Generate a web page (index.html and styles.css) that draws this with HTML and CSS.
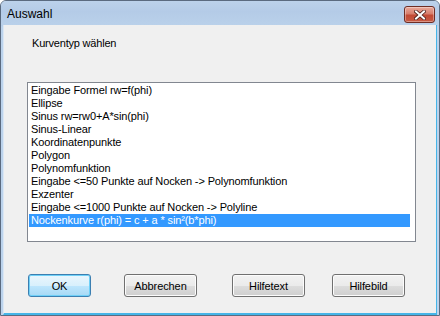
FILE: index.html
```html
<!DOCTYPE html>
<html>
<head>
<meta charset="utf-8">
<link rel="stylesheet" href="styles.css">
</head>
<body>
<div class="window">
  <div class="titlebar">
    <span class="title">Auswahl</span>
    <div class="close">
      <svg width="12" height="10" viewBox="0 0 12 10">
        <path d="M2 1.5 L10 8.5 M10 1.5 L2 8.5" stroke="#4a1f1a" stroke-width="3.6" stroke-linecap="square" fill="none"/>
        <path d="M2 1.5 L10 8.5 M10 1.5 L2 8.5" stroke="#ffffff" stroke-width="2" stroke-linecap="square" fill="none"/>
      </svg>
    </div>
  </div>
  <div class="client">
    <div class="label">Kurventyp wählen</div>
    <div class="listbox">
      <div class="item">Eingabe Formel rw=f(phi)</div>
      <div class="item">Ellipse</div>
      <div class="item">Sinus rw=rw0+A*sin(phi)</div>
      <div class="item">Sinus-Linear</div>
      <div class="item">Koordinatenpunkte</div>
      <div class="item">Polygon</div>
      <div class="item">Polynomfunktion</div>
      <div class="item">Eingabe &lt;=50 Punkte auf Nocken -&gt; Polynomfunktion</div>
      <div class="item">Exzenter</div>
      <div class="item">Eingabe &lt;=1000 Punkte auf Nocken -&gt; Polyline</div>
      <div class="item selected">Nockenkurve r(phi) = c + a * sin²(b*phi)</div>
    </div>
    <div class="buttons">
      <button class="btn default ok">OK</button>
      <button class="btn cancel">Abbrechen</button>
      <button class="btn helptext">Hilfetext</button>
      <button class="btn helpimg">Hilfebild</button>
    </div>
  </div>
</div>
</body>
</html>
```
FILE: styles.css
```css
html, body {
  margin: 0;
  padding: 0;
  background: #ffffff;
}
.window {
  width: 440px;
  height: 316px;
  box-sizing: border-box;
  border: 1px solid #5b6b80;
  border-radius: 6px 6px 0 0;
  background: linear-gradient(to bottom, #c5d8ee 0px, #b6cde8 24px, #bcd3ec 26px, #bcd3ec 100%);
  display: flex;
  flex-direction: column;
  overflow: hidden;
  font-family: "Liberation Sans", Arial, sans-serif;
}
.titlebar {
  height: 24px;
  flex: none;
  display: flex;
  align-items: center;
  justify-content: space-between;
  padding: 0 4px 0 6px;
  background: linear-gradient(to bottom, #bcd2eb 0%, #b4cbe7 45%, #bad1ea 100%);
}
.title {
  font-size: 12px;
  color: #000;
  margin-top: 2px;
}
.close {
  width: 29px;
  height: 15px;
  border: 1px solid #6e2d24;
  border-radius: 3px;
  background: linear-gradient(to bottom, #e9a99b 0%, #d77e6c 45%, #c24a35 55%, #c65a43 100%);
  display: flex;
  align-items: center;
  justify-content: center;
  margin-top: 3px;
  box-shadow: inset 0 0 0 1px rgba(255,255,255,0.35);
}
.client {
  flex: 1;
  margin: 0 2px 0 2px;
  background: #f0f0f0;
  border-bottom: 2px solid #45b5e8;
  border-right: 1px solid #45b5e8;
  border-left: 1px solid #dbe7f4;
  padding: 12px 0 0 23px;
}
.label {
  font-size: 11px;
  line-height: 13px;
  letter-spacing: -0.2px;
  padding-left: 5px;
  color: #000;
}
.listbox {
  margin-top: 32px;
  width: 389px;
  height: 160px;
  box-sizing: border-box;
  border: 1px solid #828790;
  background: #ffffff;
  padding: 1px 5px 0 1px;
}
.item {
  font-size: 11px;
  line-height: 13px;
  height: 13px;
  letter-spacing: -0.12px;
  padding-left: 2px;
  color: #000;
  white-space: nowrap;
}
.item.selected {
  background: #3399ff;
  color: #ffffff;
}
.buttons {
  display: flex;
  margin-top: 32px;
}
.btn {
  height: 23px;
  width: 73px;
  padding: 0;
  font-family: "Liberation Sans", Arial, sans-serif;
  font-size: 11px;
  letter-spacing: -0.1px;
  color: #000;
  border: 1px solid #707070;
  border-radius: 3px;
  background: linear-gradient(to bottom, #f2f2f2 0%, #ebebeb 50%, #dddddd 51%, #cfcfcf 100%);
  box-shadow: inset 0 0 0 1px #fcfcfc;
}
.btn.default {
  border-color: #3c7fb1;
  background: linear-gradient(to bottom, #eaf6fd 0%, #d9f0fc 50%, #bee6fd 51%, #a7d9f5 100%);
  box-shadow: inset 0 0 0 1px #6fd0f7;
}
.ok { width: 63px; margin-left: 1px; }
.cancel { margin-left: 33px; }
.helptext { margin-left: 35px; }
.helpimg { margin-left: 27px; }
```
